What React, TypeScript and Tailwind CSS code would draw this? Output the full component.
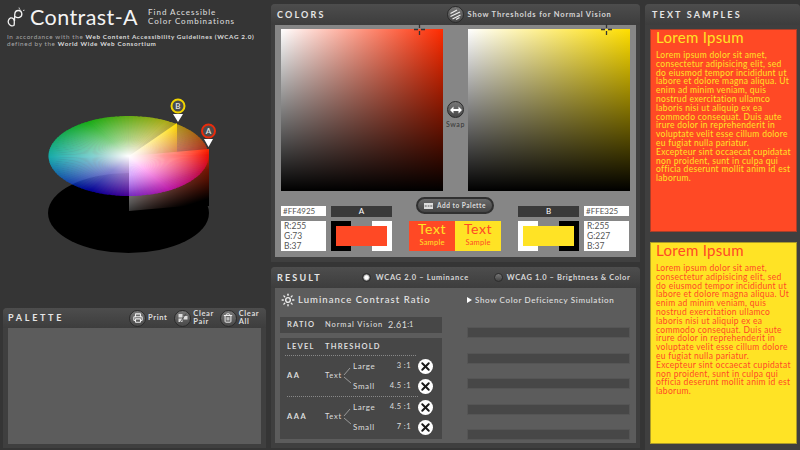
import { Fragment } from "react";
import { Printer, Sun, Trash2, X } from "lucide-react";

const loremLines = [
  "Lorem ipsum dolor sit amet,",
  "consectetur adipisicing elit, sed",
  "do eiusmod tempor incididunt ut",
  "labore et dolore magna aliqua. Ut",
  "enim ad minim veniam, quis",
  "nostrud exercitation ullamco",
  "laboris nisi ut aliquip ex ea",
  "commodo consequat. Duis aute",
  "irure dolor in reprehenderit in",
  "voluptate velit esse cillum dolore",
  "eu fugiat nulla pariatur.",
  "Excepteur sint occaecat cupidatat",
  "non proident, sunt in culpa qui",
  "officia deserunt mollit anim id est",
  "laborum.",
];

const CX = 128.5;
const CY = 156;
const RX = 80;
const RY = 40;

function wedge(hue: number) {
  const a = (-(hue - 0.4) * Math.PI) / 180;
  const b = (-(hue + 3.4) * Math.PI) / 180;
  return `M${CX} ${CY}L${CX + RX * Math.cos(a)} ${CY + RY * Math.sin(a)}A${RX} ${RY} 0 0 0 ${CX + RX * Math.cos(b)} ${CY + RY * Math.sin(b)}Z`;
}

const hues = Array.from({ length: 120 }, (_, i) => i * 3);

function Wheel() {
  return (
    <svg width="270" height="165" viewBox="0 95 270 165" className="block">
      <defs>
        <linearGradient id="planeA" x1="0" x2="1" y1="0" y2="0">
          <stop offset="0" stopColor="#fff" />
          <stop offset="1" stopColor="#ff2b00" />
        </linearGradient>
        <linearGradient id="planeB" x1="0" x2="1" y1="0" y2="0">
          <stop offset="0" stopColor="#fff" />
          <stop offset="1" stopColor="#ffde00" />
        </linearGradient>
        <linearGradient id="fadeA" gradientUnits="userSpaceOnUse" x1="129" y1="150" x2="152" y2="223">
          <stop offset="0.3" stopColor="#000" stopOpacity="0" />
          <stop offset="0.55" stopColor="#000" stopOpacity="0.55" />
          <stop offset="0.67" stopColor="#000" stopOpacity="0.67" />
          <stop offset="0.92" stopColor="#000" />
        </linearGradient>
        <linearGradient id="fadeB" gradientUnits="userSpaceOnUse" x1="129" y1="156" x2="155" y2="195">
          <stop offset="0" stopColor="#000" stopOpacity="0" />
          <stop offset="1" stopColor="#000" />
        </linearGradient>
        <radialGradient id="centerGlow">
          <stop offset="0" stopColor="#fff" stopOpacity="1" />
          <stop offset="0.4" stopColor="#fff" stopOpacity="0.5" />
          <stop offset="1" stopColor="#fff" stopOpacity="0" />
        </radialGradient>
      </defs>
      <ellipse cx={CX} cy="213" rx="80.5" ry="40" fill="#000" />
      <polygon points="129,156 177,123 177,176 129,209" fill="url(#planeB)" />
      <polygon points="129,156 177,123 177,180 129,213" fill="url(#fadeB)" />
      <polygon points="129,156 209,149 209,204 129,211" fill="url(#planeA)" />
      <polygon points="129,156 209,149 209,206 129,213" fill="url(#fadeA)" />
      <g opacity="0.58">
        {hues.map((h) => (
          <path key={h} d={wedge(h)} fill={`hsl(${h} 100% 50%)`} />
        ))}
      </g>
      <ellipse cx={CX} cy={CY} rx={RX} ry={RY} fill="url(#centerGlow)" />

      <polygon points="173,114 183,114 178,122" fill="#fff" />
      <circle cx="178" cy="106" r="6.5" fill="#4c4c4c" stroke="#f2d500" strokeWidth="2" />
      <text x="178" y="109" textAnchor="middle" fontSize="8" fontWeight="700" fill="#ddd" fontFamily="Lato, sans-serif">
        B
      </text>
      <polygon points="204,139 213,139 208.5,147" fill="#fff" />
      <circle cx="208.5" cy="131" r="6.5" fill="#4c4c4c" stroke="#e82c0c" strokeWidth="2" />
      <text x="208.5" y="134" textAnchor="middle" fontSize="8" fontWeight="700" fill="#ddd" fontFamily="Lato, sans-serif">
        A
      </text>
    </svg>
  );
}

function Logo() {
  return (
    <svg width="20" height="20" viewBox="0 0 20 20" fill="none" stroke="#f2f2f2" strokeWidth="1.3" className="shrink-0">
      <path d="M8 18.5a3.6 3.6 0 1 1-3.3-7.6c2.3-.2 3.4 1.4 3.6 3.6.1 1.4-.1 3-.3 4M8.5 14c.1-3 .1-5 .3-7 .2-2.2 1.500-3.500 3.500-3.500a3.500 3.500 0 0 1 1.200 6.800c-1.500.5-3.200.2-4.500-.8" />
      <path d="M13 .5c.3 1.200.6 1.800 1.200 2.300M17 3.500l1.500-.3" strokeWidth="0.8" />
    </svg>
  );
}

function RoundBtn({ children }: { children: React.ReactNode }) {
  return (
    <div className="flex h-[17px] w-[17px] shrink-0 items-center justify-center rounded-full border-[1.5px] border-[#2a2a2a] bg-gradient-to-b from-[#777] to-[#484848] text-[#eee]">
      {children}
    </div>
  );
}

function PanelTitle({ children }: { children: React.ReactNode }) {
  return <span className="text-[9px] font-bold tracking-[0.24em] text-[#e6e6e6]">{children}</span>;
}

function Swatch({ color, flip }: { color: string; flip?: boolean }) {
  return (
    <div className="relative flex h-[30px] w-[61px]">
      <div className={`w-[20px] ${flip ? "bg-white" : "bg-black"}`} />
      <div className="w-[21px] bg-[#868686]" />
      <div className={`w-[20px] ${flip ? "bg-black" : "bg-white"}`} />
      <div className="absolute inset-x-[5px] inset-y-[5px]" style={{ backgroundColor: color }} />
    </div>
  );
}

function RgbBox({ g }: { g: number }) {
  return (
    <div className="h-[30px] w-[45px] bg-white pl-[3px] text-[8.5px] leading-[10px] text-[#555]">
      <div>R:255</div>
      <div>G:{g}</div>
      <div>B:37</div>
    </div>
  );
}

function Badge() {
  return (
    <div className="flex h-[15px] w-[15px] items-center justify-center rounded-full bg-white">
      <X size={13} strokeWidth={3.6} color="#1a1a1a" />
    </div>
  );
}

function LevelRows({ name, rows }: { name: string; rows: [string, string][] }) {
  return (
    <div className="flex h-[40px] items-center">
      <span className="w-[38px] text-[7.5px] font-bold tracking-[0.2em] text-[#ddd]">{name}</span>
      <span className="w-[18px] text-[7.5px] tracking-[0.1em] text-[#ddd]">Text</span>
      <svg width="9" height="20" viewBox="0 0 9 20" fill="none" stroke="#cfcfcf" strokeWidth="0.6" className="mr-[1px]">
        <path d="M1 9 7 2M1 11l7 6" />
      </svg>
      <div className="flex flex-col gap-[5px]">
        {rows.map(([size, ratio]) => (
          <div key={size} className="flex h-[15px] items-center">
            <span className="w-[30px] text-[8px] tracking-[0.08em] text-[#ddd]">{size}</span>
            <span className="w-[28px] text-right text-[7.5px] tracking-[0.06em] text-[#ddd]">{ratio}</span>
            <span className="ml-[7px]">
              <Badge />
            </span>
          </div>
        ))}
      </div>
    </div>
  );
}

function Sample({ bg, fg, className }: { bg: string; fg: string; className: string }) {
  return (
    <div className={`${bg} ${fg} ${className} w-[147px] border border-[#2f2f2f]/40 pl-[5px]`}>
      <div className="text-[15px] leading-[14px] tracking-[0.02em]">Lorem Ipsum</div>
      <p className="mt-[7px] text-[8.5px] leading-[8.8px] tracking-[0.035em] whitespace-nowrap">
        {loremLines.map((line) => (
          <Fragment key={line}>
            {line}
            <br />
          </Fragment>
        ))}
      </p>
    </div>
  );
}

export default function App() {
  return (
    <div className="flex h-[450px] w-[800px] overflow-hidden bg-[#353535] font-['Lato',sans-serif]">
      {/* left column */}
      <div className="w-[271px] shrink-0">
        <div className="h-[95px] pl-[6px] pt-[5px]">
          <div className="flex items-center">
            <Logo />
            <span className="ml-[4px] text-[21.5px] leading-[24px] tracking-[0.02em] text-[#f4f4f4]">Contrast-A</span>
            <div className="-mt-[1px] ml-[10px] text-[8px] leading-[8.5px] font-medium tracking-[0.12em] text-[#d8d8d8]">
              <div>Find Accessible</div>
              <div>Color Combinations</div>
            </div>
          </div>
          <div className="mt-[4px] pl-px text-[6.3px] leading-[7px] tracking-[0.1em] text-[#a8a8a8]">
            <div>
              In accordance with the <b className="text-[#dcdcdc]">Web Content Accessibility Guidelines (WCAG 2.0)</b>
            </div>
            <div>
              defined by the <b className="text-[#dcdcdc]">World Wide Web Consortium</b>
            </div>
          </div>
        </div>
        <Wheel />
        <div className="ml-[3px] mt-[48px] h-[140px] w-[263px] rounded-t-[4px] bg-[#3f3f3f] px-[5px] pb-[4px]">
          <div className="-mx-[5px] flex h-[20px] items-center rounded-t-[4px] bg-gradient-to-b from-[#4d4d4d] to-[#3d3d3d] pl-[5px]">
            <span className="text-[9px] font-bold tracking-[0.3em] text-[#e6e6e6]">PALETTE</span>
            <div className="ml-[65px]">
              <RoundBtn>
                <Printer size={10} strokeWidth={2.6} />
              </RoundBtn>
            </div>
            <span className="ml-[2px] text-[7.5px] font-bold tracking-[0.08em] text-[#ddd]">Print</span>
            <div className="ml-[7px]">
              <RoundBtn>
                <svg width="10" height="10" viewBox="0 0 10 10" fill="#ddd">
                  <rect x="0.5" y="1" width="4" height="3.500" />
                  <rect x="0.5" y="5.500" width="4" height="3.500" />
                  <rect x="5.500" y="3" width="4" height="3.500" />
                  <path d="M2 9.500 8 .5" stroke="#444" strokeWidth="0.8" />
                </svg>
              </RoundBtn>
            </div>
            <span className="ml-[2px] text-[7.5px] leading-[8px] font-bold tracking-[0.08em] text-[#ddd]">
              Clear
              <br />
              Pair
            </span>
            <div className="ml-[6px]">
              <RoundBtn>
                <Trash2 size={10} strokeWidth={2.4} />
              </RoundBtn>
            </div>
            <span className="ml-[2px] text-[7.5px] leading-[8px] font-bold tracking-[0.08em] text-[#ddd]">
              Clear
              <br />
              All
            </span>
          </div>
          <div className="h-[116px] bg-[#5c5c5c]" />
        </div>
      </div>

      {/* middle column */}
      <div className="w-[369px] shrink-0 pt-[4px]">
        <div className="h-[258px] rounded-t-[4px] bg-[#3f3f3f] px-[4px] pb-[5px]">
          <div className="-mx-[4px] flex h-[21px] items-center rounded-t-[4px] bg-gradient-to-b from-[#4d4d4d] to-[#3d3d3d] pl-[6px]">
            <PanelTitle>COLORS</PanelTitle>
            <div className="ml-[121px]">
              <RoundBtn>
                <svg width="13" height="13" viewBox="0 0 13 13" fill="none" stroke="#eee" strokeWidth="1.300">
                  <path d="M1.500 5.500 8 2M1.500 8.500 11 4M3.500 11 11.500 7M7 11.500l3.500-2" />
                </svg>
              </RoundBtn>
            </div>
            <span className="ml-[4px] text-[7.5px] font-bold tracking-[0.11em] text-[#d6d6d6]">
              Show Thresholds for Normal Vision
            </span>
          </div>
          <div className="h-[232px] bg-[#868686] px-[6px] pt-[4px]">
            <div className="flex">
              <div className="relative h-[162px] w-[162px] bg-[linear-gradient(to_top,#000,transparent),linear-gradient(to_right,#fff,#ff2b00)]">
                <Cross className="left-[133px]" />
              </div>
              <div className="flex w-[25px] flex-col items-center pt-[72px]">
                <RoundBtn>
                  <svg width="12" height="12" viewBox="0 0 12 12" fill="#fff">
                    <path d="M0 6 3.500 2.500V5h5V2.500L12 6 8.500 9.500V7h-5v2.500z" />
                  </svg>
                </RoundBtn>
                <span className="mt-px text-[7px] font-medium tracking-[0.08em] text-[#3a3a3a]">Swap</span>
              </div>
              <div className="relative h-[162px] w-[162px] bg-[linear-gradient(to_top,#000,transparent),linear-gradient(to_right,#fff,#ffde00)]">
                <Cross className="left-[133px]" />
              </div>
            </div>
            <div className="relative mt-[15px] flex">
              <div className="w-[45px]">
                <div className="h-[10px] bg-white pl-[2px] text-[8px] leading-[10px] text-[#555]">#FF4925</div>
                <div className="mt-[5px]">
                  <RgbBox g={73} />
                </div>
              </div>
              <div className="ml-[5px] w-[61px]">
                <div className="h-[11px] bg-[#3a3a3a] text-center text-[8px] leading-[11px] text-white">A</div>
                <div className="mt-[4px]">
                  <Swatch color="#ff4925" />
                </div>
              </div>
              <div className="mt-[15px] ml-[17px] flex h-[30px] w-[92px] text-center">
                <div className="h-full w-[46px] bg-[#ff4925] text-[#ffe325]">
                  <div className="text-[14px] leading-[16px] tracking-[0.04em]">Text</div>
                  <div className="text-[7.5px] leading-[11px] tracking-[0.03em]">Sample</div>
                </div>
                <div className="h-full w-[46px] bg-[#ffe325] text-[#ff4925]">
                  <div className="text-[14px] leading-[16px] tracking-[0.04em]">Text</div>
                  <div className="text-[7.5px] leading-[11px] tracking-[0.03em]">Sample</div>
                </div>
              </div>
              <div className="ml-[17px] w-[61px]">
                <div className="h-[11px] bg-[#3a3a3a] text-center text-[8px] leading-[11px] text-white">B</div>
                <div className="mt-[4px]">
                  <Swatch color="#ffe325" flip />
                </div>
              </div>
              <div className="ml-[5px] w-[45px]">
                <div className="h-[10px] bg-white pl-[2px] text-[8px] leading-[10px] text-[#555]">#FFE325</div>
                <div className="mt-[5px]">
                  <RgbBox g={227} />
                </div>
              </div>
              <div className="absolute left-[135px] -top-[9px] flex h-[17px] w-[78px] items-center justify-center gap-[4px] rounded-full border-2 border-[#303030] bg-gradient-to-b from-[#6a6a6a] to-[#454545]">
                <svg width="9" height="6" viewBox="0 0 9 6" fill="#ddd">
                  <path d="M0 0h9v6H0zM.7 2.500v1h2v-1zm3 0v1h1.700v-1zm2.600 0v1h2v-1z" fillRule="evenodd" />
                </svg>
                <span className="text-[6.5px] font-bold tracking-[0.08em] text-[#ddd]">Add to Palette</span>
              </div>
            </div>
          </div>
        </div>

        <div className="mt-[5px] h-[181px] rounded-t-[4px] bg-[#3f3f3f] px-[4px] pb-[5px]">
          <div className="-mx-[4px] flex h-[21px] items-center rounded-t-[4px] bg-gradient-to-b from-[#4d4d4d] to-[#3d3d3d] pl-[6px]">
            <PanelTitle>RESULT</PanelTitle>
            <span className="ml-[40px] h-[9px] w-[9px] rounded-full border border-[#2c2c2c] bg-[radial-gradient(circle,#fff_35%,#555_75%)]" />
            <span className="ml-[5px] text-[7.5px] font-bold tracking-[0.09em] text-[#d6d6d6]">WCAG 2.0 – Luminance</span>
            <span className="ml-[25px] h-[9px] w-[9px] rounded-full border border-[#2c2c2c] bg-gradient-to-b from-[#777] to-[#444]" />
            <span className="ml-[4px] text-[7.5px] font-bold tracking-[0.08em] text-[#d6d6d6]">
              WCAG 1.0 – Brightness &amp; Color
            </span>
          </div>
          <div className="flex h-[155px] bg-[#5c5c5c] pl-[5px]">
            <div className="w-[162px]">
              <div className="flex h-[24px] items-center pl-px">
                <Sun size={14} strokeWidth={2.4} color="#eee" />
                <span className="ml-[3px] text-[9.5px] font-medium tracking-[0.11em] text-[#e8e8e8]">
                  Luminance Contrast Ratio
                </span>
              </div>
              <div className="mt-[5px] flex h-[16px] items-center bg-[#474747] pl-[7px] text-[7.5px] text-[#ddd]">
                <span className="w-[38px] font-bold tracking-[0.16em]">RATIO</span>
                <span className="w-[63px] font-medium tracking-[0.12em]">Normal Vision</span>
                <span className="text-[9px] tracking-[0.04em]">2.61</span>
                <span>:1</span>
              </div>
              <div className="mt-[5px] h-[101px] bg-[#474747] pl-[7px] pt-[5px]">
                <div className="flex text-[7.5px] font-bold leading-[8px] tracking-[0.16em] text-[#ddd]">
                  <span className="w-[38px]">LEVEL</span>
                  <span>THRESHOLD</span>
                </div>
                <div className="mt-[4px] -ml-[2px] w-[131px] border-t border-dotted border-[#888]" />
                <LevelRows
                  name="AA"
                  rows={[
                    ["Large", "3 :1"],
                    ["Small", "4.5 :1"],
                  ]}
                />
                <div className="w-[131px] border-t border-dotted border-[#888]" />
                <LevelRows
                  name="AAA"
                  rows={[
                    ["Large", "4.5 :1"],
                    ["Small", "7 :1"],
                  ]}
                />
              </div>
            </div>
            <div className="ml-[25px] w-[163px]">
              <div className="flex h-[24px] items-center">
                <span className="h-0 w-0 border-y-[3px] border-l-[5px] border-y-transparent border-l-white" />
                <span className="ml-[3px] text-[8px] font-medium tracking-[0.08em] text-[#e0e0e0]">
                  Show Color Deficiency Simulation
                </span>
              </div>
              <div className="mt-[15px] flex flex-col gap-[14.500px]">
                {[0, 1, 2, 3, 4].map((i) => (
                  <div key={i} className="h-[11px] border border-[#555] bg-[#474747]" />
                ))}
              </div>
            </div>
          </div>
        </div>
      </div>

      {/* right column */}
      <div className="ml-[5px] flex-1 pt-[4px]">
        <div className="h-[446px] rounded-t-[4px] bg-[#3f3f3f] pl-[5px]">
          <div className="-ml-[5px] flex h-[21px] items-center rounded-t-[4px] bg-gradient-to-b from-[#4d4d4d] to-[#3d3d3d] pl-[7px]">
            <PanelTitle>TEXT SAMPLES</PanelTitle>
          </div>
          <Sample bg="bg-[#ff4925]" fg="text-[#ffe325]" className="mt-[4px] h-[203px]" />
          <Sample bg="bg-[#ffe325]" fg="text-[#ff4925]" className="mt-[10px] h-[202px]" />
        </div>
      </div>
    </div>
  );
}

function Cross({ className }: { className: string }) {
  return (
    <svg
      width="11"
      height="11"
      viewBox="0 0 11 11"
      stroke="#333"
      strokeWidth="1.300"
      className={`absolute -top-[5px] ${className}`}
    >
      <path d="M5.500 0v4M5.500 7v4M0 5.500h4M7 5.500h4" />
    </svg>
  );
}
